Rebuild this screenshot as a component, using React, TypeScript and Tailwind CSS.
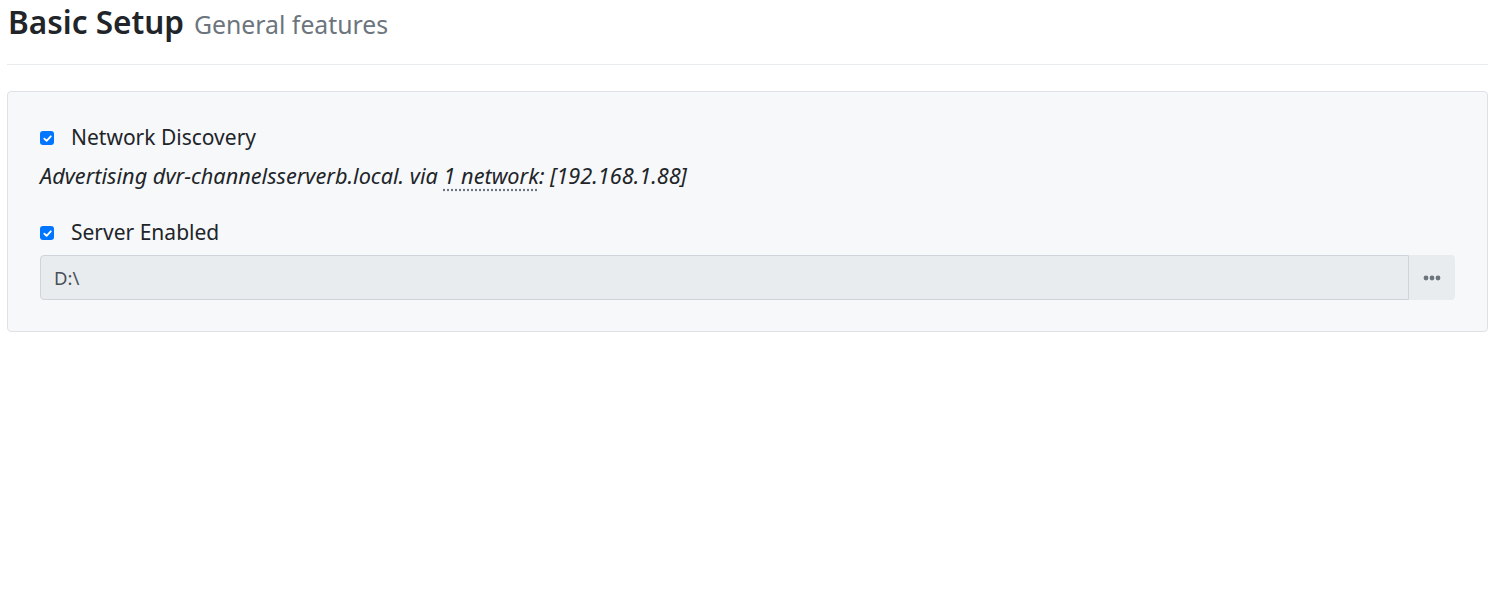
const Check = () => (
  <span className="inline-flex h-[14px] w-[14px] shrink-0 items-center justify-center rounded-[3px] bg-[#0075ff]">
    <svg viewBox="0 0 12 12" className="h-[11px] w-[11px]" fill="none">
      <path d="M2.5 6.2 L5 8.6 L9.6 3.6" stroke="white" strokeWidth="2" strokeLinecap="round" strokeLinejoin="round" />
    </svg>
  </span>
);

export default function App() {
  return (
    <div
      className="min-h-[612px] w-[1502px] bg-white pl-[7px] pr-[14px] text-[#212529]"
      style={{ fontFamily: '"Noto Sans", "Open Sans", sans-serif' }}
    >
      <div className="flex h-[44px] items-baseline gap-[10px] pl-[1px]">
        <h3 className="text-[31.5px] font-semibold leading-[44px] text-[#212529]">Basic Setup</h3>
        <small className="text-[24.8px] text-[#6c757d]">General features</small>
      </div>
      <hr className="mt-[20px] border-t border-[#e9ecef]" />

      <div className="mt-[26px] rounded-[4px] border border-[#dee2e6] bg-[#f7f8fa] px-[32px] pt-[31px] pb-[31px]">
        <label className="flex h-[30px] items-center">
          <Check />
          <span className="ml-[17px] text-[21px]">Network Discovery</span>
        </label>
        <p className="mt-[8px] text-[21.7px] italic leading-[30px]">
          Advertising dvr-channelsserverb.local. via{' '}
          <span className="underline decoration-dotted decoration-[#6c757d] underline-offset-[5px]">1 network</span>
          : [192.168.1.88]
        </p>

        <label className="mt-[27px] flex h-[30px] items-center">
          <Check />
          <span className="ml-[17px] text-[21px]">Server Enabled</span>
        </label>
        <div className="mt-[7px] flex h-[45px]">
          <div className="flex flex-1 items-center rounded-l-[4px] border border-[#ced4da] bg-[#e9ecef] px-[13px] text-[18.5px] text-[#495057]">
            D:\
          </div>
          <button className="flex w-[46px] items-center justify-center rounded-r-[4px] bg-[#e9ecef]">
            <svg viewBox="0 0 18 6" className="h-[6px] w-[18px]" fill="#6c757d">
              <circle cx="3" cy="3" r="2.4" />
              <circle cx="9" cy="3" r="2.4" />
              <circle cx="15" cy="3" r="2.4" />
            </svg>
          </button>
        </div>
      </div>
    </div>
  );
}
